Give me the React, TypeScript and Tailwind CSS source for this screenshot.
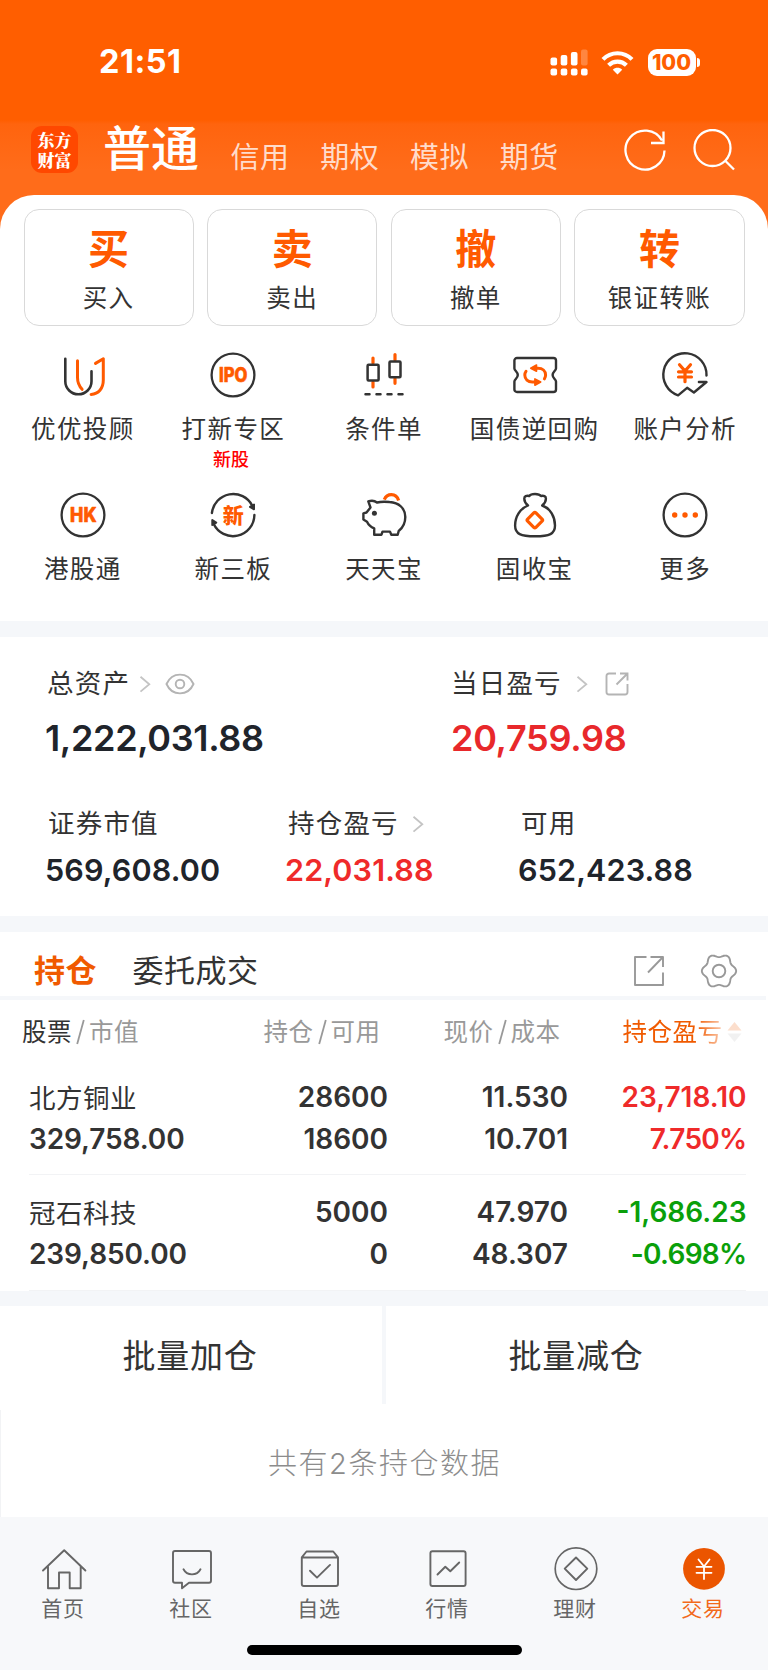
import React from "react";

const DARK = "#333333";
const ORANGE = "#ff5a00";

function Glyph({ size = 48, children }: { size?: number; children: React.ReactNode }) {
  return (
    <svg width={size} height={size} viewBox="0 0 48 48" fill="none" strokeLinecap="round" strokeLinejoin="round" className="block shrink-0 overflow-visible">
      {children}
    </svg>
  );
}

function Yen({ color, w }: { color: string; w: number }) {
  return (
    <g transform="translate(24.5 22)" stroke={color} strokeWidth={w}>
      <path d="M-5.5 -8.3L0 -2L5.5 -8.3M0 -2V8.7M-6.5 -1.2H6.5M-6.5 4H6.5" />
    </g>
  );
}

const icons: Record<string, React.ReactNode> = {
  uu: (
    <Glyph>
      <path d="M6.3 7.8V30.3a13.1 13 0 0 0 26.2 0V20.3" stroke={DARK} strokeWidth="2.6" />
      <path d="M18.5 9.8V26.5c0 5 1.6 8.6 4.6 11.8M36.5 12.4L44.3 7.8V29c0 8.5-4.800 14-12.200 14.4" stroke={ORANGE} strokeWidth="3" />
    </Glyph>
  ),
  ipo: (
    <Glyph>
      <circle cx="24" cy="24" r="21.4" stroke={DARK} strokeWidth="2.3" />
      <text x="24.2" y="31" textAnchor="middle" textLength="28.5" lengthAdjust="spacingAndGlyphs" fontSize="19.5" fontWeight="800" fill={ORANGE} stroke={ORANGE} strokeWidth="0.6">IPO</text>
    </Glyph>
  ),
  candle: (
    <Glyph>
      <path d="M13 7V12M13 31V36M35 3.5V9M35 27.500V32.300" stroke={ORANGE} strokeWidth="3.2" />
      <rect x="7.600" y="13.700" width="11" height="15.800" rx="1" stroke={DARK} strokeWidth="2.500" />
      <rect x="29.500" y="10.400" width="11" height="15.800" rx="1" stroke={DARK} strokeWidth="2.500" />
      <path d="M5.500 43.300h4M16.500 43.300h4M27.500 43.300h4M38.500 43.300h4" stroke={DARK} strokeWidth="2.500" />
    </Glyph>
  ),
  bond: (
    <Glyph>
      <path d="M6 7H42.400a2.600 2.600 0 0 1 2.600 2.600V17.500c0 2-3.400 3.400-3.400 6.500s3.400 4.500 3.400 6.500V38.400A2.600 2.600 0 0 1 42.400 41H6A2.600 2.600 0 0 1 3.400 38.400V30.500c0-2 3.400-3.400 3.400-6.500S3.400 19.500 3.400 17.500V9.600A2.600 2.600 0 0 1 6 7Z" stroke={DARK} strokeWidth="2.400" />
      <path d="M23.500 17.200h3.500c4.500 0 7.600 2.600 7.600 6.800 0 1.300-.5 2.800-1.200 3.800M25.500 31h-4.200c-4.400 0-7.500-2.700-7.500-6.900 0-1.400.4-2.700 1.200-3.800" stroke={ORANGE} strokeWidth="3" />
      <path d="M25.500 14V20.300L19.700 17.200ZM23.900 27.900V34.200L29.700 31Z" fill={ORANGE} stroke={ORANGE} strokeWidth="1.600" />
    </Glyph>
  ),
  account: (
    <Glyph>
      <path d="M45.500 24.500A21.600 21.600 0 1 0 17.100 44.300L26.100 36.800L32.900 41.500L45.500 31H37.900" stroke={DARK} strokeWidth="2.400" />
      <g transform="translate(-0.500 0)"><Yen color={ORANGE} w={3.2} /></g>
    </Glyph>
  ),
  hk: (
    <Glyph>
      <circle cx="24" cy="24" r="21.400" stroke={DARK} strokeWidth="2.300" />
      <text x="24.300" y="31" textAnchor="middle" textLength="26.500" lengthAdjust="spacingAndGlyphs" fontSize="19.500" fontWeight="800" fill={ORANGE} stroke={ORANGE} strokeWidth="0.600">HK</text>
    </Glyph>
  ),
  xin: (
    <Glyph>
      <path d="M2.900 22A21.400 21.400 0 0 1 43.200 14.600M45.400 24A21.400 21.400 0 0 1 4.600 32.800" stroke={DARK} strokeWidth="2.400" />
      <path d="M45 13.500V18.300L41 15.800ZM3.300 34V29L7.200 31.600Z" fill={DARK} stroke={DARK} strokeWidth="2" />
      <text x="24.200" y="31.600" textAnchor="middle" fontSize="21" fontWeight="900" fill={ORANGE}>新</text>
    </Glyph>
  ),
  pig: (
    <Glyph>
      <path d="M24.300 8.600C27 2.200 36 1.600 38.600 9.400" stroke={ORANGE} strokeWidth="3.200" strokeLinecap="butt" />
      <path d="M8.300 10.400C11 9.400 14.500 9.500 17 11.500C20 10.700 25 10.500 29.500 11C39 11.500 45.300 17.500 45.300 26C45.300 32 42.500 37 38.700 40L37.700 43.700H31.300L30 40.600H22.500L21.500 43.700H14.200V37.300C11 36 8.300 33.500 7 30.700L3.400 28.500V22.300L6.500 21.500L10.500 16.500Z" stroke={DARK} strokeWidth="2.400" />
      <circle cx="14.400" cy="22.300" r="2.500" fill={DARK} />
    </Glyph>
  ),
  bag: (
    <Glyph>
      <path d="M17 14.500C14.500 12.500 13.200 10 13.300 7.500C13.300 5.200 15.500 4.300 18.200 5C20 2.300 28 2.300 30 5C32.700 4.300 34.900 5.200 34.900 7.500C35 10 33.700 12.500 31.200 14.500C39.500 17.500 44 26 44 34.500C44 43 38.500 45.300 24.100 45.300S4.100 43 4.100 34.500C4.100 26 9 17.500 17 14.500Z" stroke={DARK} strokeWidth="2.400" />
      <rect x="18" y="23.300" width="11.700" height="11.700" rx="1.500" transform="rotate(45 23.850 29.150)" stroke={ORANGE} strokeWidth="3.200" />
    </Glyph>
  ),
  more: (
    <Glyph>
      <circle cx="24" cy="24" r="21.400" stroke={DARK} strokeWidth="2.300" />
      <circle cx="13.700" cy="24" r="2.700" fill={ORANGE} />
      <circle cx="24" cy="24" r="2.700" fill={ORANGE} />
      <circle cx="34.300" cy="24" r="2.700" fill={ORANGE} />
    </Glyph>
  ),
};

const navIcons: Record<string, React.ReactNode> = {
  home: (
    <Glyph>
      <path d="M3 25.500L24.200 5.300L45.400 25.500M8 21.500V43.200H19V27.500H29.700V43.200H40.700V21.500" stroke="#666" strokeWidth="1.900" />
    </Glyph>
  ),
  chat: (
    <Glyph>
      <path d="M7 6H41a2 2 0 0 1 2 2V35.700a2 2 0 0 1-2 2H21L14 43.300V37.700H7a2 2 0 0 1-2-2V8A2 2 0 0 1 7 6ZM15.500 24.300C19 31 29 31 32.500 24.300" stroke="#666" strokeWidth="1.900" />
    </Glyph>
  ),
  pick: (
    <Glyph>
      <path d="M5.800 12.300L10.500 6.500H37.200L42 12.300V39a2 2 0 0 1-2 2H7.800a2 2 0 0 1-2-2ZM5.800 12.500H42M14 25.700L21 32.600L34 19.900" stroke="#666" strokeWidth="1.900" />
    </Glyph>
  ),
  chart: (
    <Glyph>
      <rect x="6.400" y="6.300" width="35.200" height="34.700" rx="2" stroke="#666" strokeWidth="1.900" />
      <path d="M13.500 29.500L21.300 21.800L26.300 26.300L35.200 17.500" stroke="#666" strokeWidth="1.900" />
    </Glyph>
  ),
  wealth: (
    <Glyph>
      <circle cx="24" cy="23.700" r="20.800" stroke="#666" strokeWidth="1.700" />
      <path d="M24 12.500L35.300 23.700L24 35L12.700 23.700Z" stroke="#666" strokeWidth="1.900" />
    </Glyph>
  ),
  trade: (
    <Glyph>
      <circle cx="24" cy="23.800" r="20.900" fill="#eb5500" />
      <path d="M18.500 14.500L24 21.500L29.500 14.500M24 21.500V34M16.500 21.800H31.500M16.500 27.800H31.500" stroke="#fff" strokeWidth="1.800" />
    </Glyph>
  ),
};

const gearPoints = Array.from({ length: 120 }, (_, i) => {
  const a = (i / 120) * Math.PI * 2;
  const r = 15.5 + 1.65 * Math.cos(6 * a);
  return `${(19 + r * Math.cos(a)).toFixed(2)},${(19 + r * Math.sin(a)).toFixed(2)}`;
}).join(" ");

function Chevron({ className = "" }: { className?: string }) {
  return (
    <svg width="12" height="18" viewBox="0 0 12 18" fill="none" stroke="#c4c4c4" strokeWidth="1.800" className={`block shrink-0 ${className}`}>
      <path d="M1.500 1.800L10.300 9.200L1.500 16.600" />
    </svg>
  );
}

const actions = [
  ["买", "买入"],
  ["卖", "卖出"],
  ["撤", "撤单"],
  ["转", "银证转账"],
];

const shortcuts = [
  [
    ["uu", "优优投顾", ""],
    ["ipo", "打新专区", "新股"],
    ["candle", "条件单", ""],
    ["bond", "国债逆回购", ""],
    ["account", "账户分析", ""],
  ],
  [
    ["hk", "港股通", ""],
    ["xin", "新三板", ""],
    ["pig", "天天宝", ""],
    ["bag", "固收宝", ""],
    ["more", "更多", ""],
  ],
];

const holdings = [
  { name: "北方铜业", value: "329,758.00", qty: "28600", avail: "18600", price: "11.530", cost: "10.701", pl: "23,718.10", pct: "7.750%", up: true },
  { name: "冠石科技", value: "239,850.00", qty: "5000", avail: "0", price: "47.970", cost: "48.307", pl: "-1,686.23", pct: "-0.698%", up: false },
];

const nav = [
  ["home", "首页"],
  ["chat", "社区"],
  ["pick", "自选"],
  ["chart", "行情"],
  ["wealth", "理财"],
  ["trade", "交易"],
];

function Header() {
  return (
    <header className="h-[195px] bg-[linear-gradient(to_bottom,#ff5e00_0px,#ff5e00_120px,#ff640e_124px,#ff6c1a_170px,#ff6c1a_194px)] text-white">
      <div className="flex h-[125px] items-center pl-[99px] pr-[68px]">
        <div className="text-[32.500px] leading-none font-bold tracking-[0.500px]">21:51</div>
        <svg width="38" height="28" viewBox="0 0 38 28" fill="#fff" className="ml-auto">
          <rect x="0.500" y="8.500" width="6.600" height="8" rx="2" />
          <rect x="10.700" y="6" width="6.600" height="10.500" rx="2" />
          <rect x="20.900" y="3" width="6.600" height="13.500" rx="2" />
          <rect x="31" y="0.500" width="6.600" height="16" rx="2" opacity="0.250" />
          <rect x="0.500" y="19.500" width="6.600" height="7" rx="2" />
          <rect x="10.700" y="19.500" width="6.600" height="7" rx="2" />
          <rect x="20.900" y="19.500" width="6.600" height="7" rx="2" />
          <rect x="31" y="19.500" width="6.600" height="7" rx="2" />
        </svg>
        <svg width="33" height="26" viewBox="0 0 33 26" fill="none" stroke="#fff" strokeWidth="4.200" className="ml-[13px]">
          <path d="M2 9.400C10 1.200 23 1.200 31 9.400" />
          <path d="M7.600 15.300C12.600 10.400 20.400 10.400 25.400 15.300" />
          <path d="M11.800 19.700C14.500 17.200 18.500 17.200 21.200 19.700L16.500 24.500Z" fill="#fff" stroke="none" />
        </svg>
        <div className="ml-[13.500px] flex h-[27px] w-[48px] items-center justify-center rounded-[9px] bg-white text-[21.500px] leading-none font-extrabold text-[#ff5e00]">100</div>
        <div className="ml-[1.500px] h-[9px] w-[3px] rounded-r-full bg-white" />
      </div>
      <div className="flex h-[49px] items-center pl-[31px] pr-[33px]">
        <div className="flex size-[47px] items-center justify-center rounded-[11px] bg-[#ff4800] text-center font-['Noto_Serif_CJK_SC','Noto_Sans_CJK_SC',sans-serif] text-[17px] leading-[20px] font-black">
          <span>东方<br />财富</span>
        </div>
        <div className="ml-[25px] mt-[-1px] text-[48px] leading-[48px] font-medium">普通</div>
        <div className="ml-[31.500px] flex gap-[30.500px] pt-[17px] text-[29px] leading-[34px] tracking-[0.600px] text-[#ffdccb]">
          <span>信用</span>
          <span>期权</span>
          <span>模拟</span>
          <span>期货</span>
        </div>
        <svg width="42" height="42" viewBox="0 0 42 42" fill="none" stroke="#fff" strokeWidth="2.300" className="ml-auto">
          <path d="M40.500 21.500A19.500 19.500 0 1 1 38 11.500M39.500 2.500V14H27" />
        </svg>
        <svg width="42" height="42" viewBox="0 0 42 42" fill="none" stroke="#fff" strokeWidth="2.300" className="ml-[27px]">
          <circle cx="19.500" cy="19" r="18" />
          <path d="M32.500 32L41 40.500" />
        </svg>
      </div>
    </header>
  );
}

function QuickActions() {
  return (
    <div className="bg-[#ff6c1a]">
      <section className="h-[426px] rounded-t-[34px] bg-white px-[23.500px] pt-[14px] text-[#333]">
        <div className="grid grid-cols-4 gap-[13.500px]">
          {actions.map(([icon, label]) => (
            <div key={label} className="flex h-[117px] flex-col items-center rounded-[15px] border border-[#d9d9d9] pt-[17px]">
              <span className="text-[41px] leading-[44px] font-bold text-[#ff5a00]">{icon}</span>
              <span className="mt-[11px] text-[24.500px] leading-[32px] tracking-[1.400px]">{label}</span>
            </div>
          ))}
        </div>
        <div className="-mx-[16px] mt-[25px] flex flex-col">
          {shortcuts.map((row, i) => (
            <div key={i} className="grid h-[140px] grid-cols-5">
              {row.map(([icon, label, note]) => (
                <div key={label} className="flex flex-col items-center">
                  {icons[icon]}
                  <span className="mt-[14px] text-[24.500px] leading-[32px] tracking-[1.400px] whitespace-nowrap">{label}</span>
                  {note && <span className="mt-[4px] mr-[5px] text-[18px] leading-[22px] font-medium text-[#f00]">{note}</span>}
                </div>
              ))}
            </div>
          ))}
        </div>
      </section>
    </div>
  );
}

function Summary() {
  return (
    <section className="h-[279px] bg-white pl-[45px] text-[26.500px] text-[#333]">
      <div className="grid grid-cols-[406px_1fr] pt-[31px]">
        <div>
          <div className="flex h-[32px] items-center pl-[2px] tracking-[1.200px]">
            总资产
            <Chevron className="ml-[8.500px]" />
            <svg width="30" height="22" viewBox="0 0 30 22" fill="none" stroke="#b4b4b4" strokeWidth="1.900" className="ml-[14px]">
              <path d="M1.500 11C7 -1.500 23 -1.500 28.500 11C23 23.500 7 23.500 1.500 11Z" />
              <circle cx="15" cy="11" r="4.300" />
            </svg>
          </div>
          <div className="mt-[16px] text-[36px] leading-[44px] font-semibold tracking-[-0.350px] text-[#20242b]">1,222,031.88</div>
        </div>
        <div>
          <div className="flex h-[32px] items-center tracking-[1.200px]">
            当日盈亏
            <Chevron className="ml-[14px]" />
            <svg width="24" height="24" viewBox="0 0 24 24" fill="none" stroke="#b4b4b4" strokeWidth="1.900" className="ml-[17px]">
              <path d="M11 1.500H4a2.500 2.500 0 0 0-2.500 2.500V20A2.500 2.500 0 0 0 4 22.500H20A2.500 2.500 0 0 0 22.500 20V12M15 1.500H22.500V8.500M22 2L11.500 12.500" />
            </svg>
          </div>
          <div className="mt-[16px] text-[36px] leading-[44px] font-semibold tracking-[-0.300px] text-[#e8282b]">20,759.98</div>
        </div>
      </div>
      <div className="mt-[48px] grid grid-cols-[240px_233px_1fr]">
        {[
          ["证券市值", "569,608.00"],
          ["持仓盈亏", "22,031.88"],
          ["可用", "652,423.88"],
        ].map(([label, value], i) => (
          <div key={label}>
            <div className="flex h-[32px] items-center pl-[3px] tracking-[1.200px]">
              {label}
              {i === 1 && <Chevron className="ml-[13.500px]" />}
            </div>
            <div className={`mt-[10px] text-[30.500px] leading-[40px] font-semibold tracking-[0.150px] ${i === 1 ? "text-[#ef2a2a]" : "text-[#20242b]"}`}>{value}</div>
          </div>
        ))}
      </div>
    </section>
  );
}

function Slash() {
  return (
    <svg width="9" height="26" viewBox="0 0 9 26" fill="none" stroke="#999" strokeWidth="1.800" className="mx-[4px] shrink-0">
      <path d="M7.800 1L1.200 25" />
    </svg>
  );
}

function Holdings() {
  return (
    <section className="bg-white text-[#333]">
      <div className="flex h-[64px] items-center pt-[14px] pl-[34px] pr-[30px]">
        <span className="text-[31px] leading-[36px] font-bold tracking-[0.500px] text-[#f05a00]">持仓</span>
        <span className="ml-[35.500px] text-[31px] leading-[36px] tracking-[0.500px]">委托成交</span>
        <svg width="32" height="32" viewBox="0 0 32 32" fill="none" stroke="#999" strokeWidth="1.900" strokeLinejoin="round" className="ml-auto">
          <path d="M13.500 2H2V30H30V17.500M17.500 2H30V12M29.500 2.500L15 17.500" />
        </svg>
        <svg width="38" height="38" viewBox="0 0 38 38" fill="none" stroke="#999" strokeWidth="1.900" strokeLinejoin="round" className="ml-[35px]">
          <polygon points={gearPoints} />
          <circle cx="19" cy="19" r="6.300" />
        </svg>
      </div>
      <div className="mr-[2px] h-[4px] bg-[#f5f7fa]" />
      <div className="grid h-[62px] grid-cols-[164.500px_194px_180px_1fr] items-center pt-[1px] pl-[22px] text-[24.500px] leading-[32px] tracking-[0.500px] text-[#999]">
        <div className="flex items-center whitespace-nowrap"><span className="text-[#333]">股票</span><Slash />市值</div>
        <div className="flex items-center justify-end">持仓<Slash />可用</div>
        <div className="flex items-center justify-end">现价<Slash />成本</div>
        <div className="flex items-center pl-[62px] text-[#f05a00] [mask-image:linear-gradient(to_right,#000_135px,#0003_166px)]">
          <span className="whitespace-nowrap">持仓盈亏</span>
          <svg width="15" height="22" viewBox="0 0 15 22" className="ml-[4px]">
            <path d="M7.500 1L14.500 9.500H.5Z" fill="#f05a00" />
            <path d="M7.500 21L14.500 12.500H.5Z" fill="#bbb" />
          </svg>
        </div>
      </div>
      <div className="pl-[29px] pr-[22px]">
        {holdings.map((h, i) => (
          <div key={h.name} className={`grid grid-cols-[159px_200px_180px_178.500px] border-b border-[#f2f3f5] text-[28px] leading-[42px] font-semibold ${i === 0 ? "h-[113px] pt-[14px]" : "h-[116px] pt-[16px]"}`}>
            <div>
              <div className="pt-[2px] text-[26.500px] leading-[40px] font-normal tracking-[0.500px]">{h.name}</div>
              <div className="tracking-[-0.100px]">{h.value}</div>
            </div>
            <div className="text-right"><div>{h.qty}</div><div>{h.avail}</div></div>
            <div className="text-right"><div>{h.price}</div><div>{h.cost}</div></div>
            <div className={`text-right ${h.up ? "text-[#ef2a2a]" : "text-[#0a9f0a]"}`}><div>{h.pl}</div><div className="tracking-[-0.700px]">{h.pct}</div></div>
          </div>
        ))}
      </div>
    </section>
  );
}

export default function App() {
  return (
    <div className="flex h-[1670px] w-[768px] flex-col overflow-hidden bg-[#f5f7fa] font-['Inter','Noto_Sans_CJK_SC',sans-serif]">
      <Header />
      <QuickActions />
      <div className="h-[16px]" />
      <Summary />
      <div className="h-[16px]" />
      <Holdings />
      <div className="h-[15px]" />
      <div className="flex h-[98px] gap-[4px] text-[33px] leading-[100px] tracking-[0.700px] text-[#333]">
        <div className="flex-1 bg-white pr-[2px] text-center">批量加仓</div>
        <div className="flex-1 bg-white pr-[2px] text-center">批量减仓</div>
      </div>
      <div className="h-[6px] bg-white" />
      <div className="flex h-[107px] items-center justify-center border-l border-[#f2f3f5] bg-white text-[29px] font-light tracking-[1.500px] text-[#8c8c8c]">共有2条持仓数据</div>
      <footer className="flex flex-1 flex-col items-center bg-[#f7f8fa]">
        <div className="grid w-full grid-cols-6 pt-[28px]">
          {nav.map(([icon, label]) => (
            <div key={label} className={`flex flex-col items-center ${icon === "trade" ? "text-[#f26a1b]" : "text-[#666]"}`}>
              {navIcons[icon]}
              <span className="mt-[3px] mr-[2px] text-[21px] leading-[26px] tracking-[0.800px]">{label}</span>
            </div>
          ))}
        </div>
        <div className="mt-[23px] h-[10px] w-[275px] rounded-full bg-black" />
      </footer>
    </div>
  );
}
